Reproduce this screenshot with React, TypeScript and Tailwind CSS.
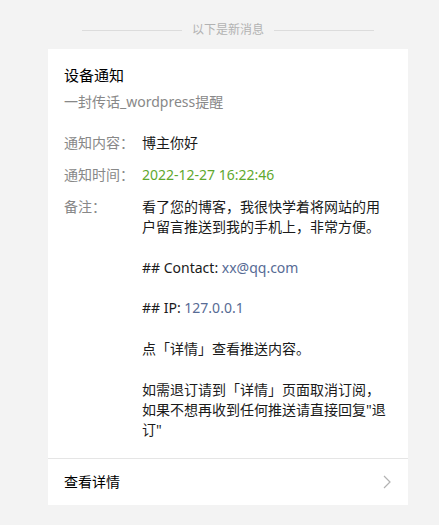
const rows = [
    {label: "通知内容：", value: "博主你好"},
];

const App: React.FC = () => {
    return (<div
        className="min-h-[525px] w-full bg-[#f3f3f3] pt-[21px] text-[14px] leading-5 text-[#1a1a1a]"
        style={{fontFamily: '"Noto Sans", "Noto Sans CJK SC", sans-serif'}}>
        <div className="ml-[82px] flex w-[292px] items-center justify-between">
            <div className="h-px w-[100px] bg-[#dcdcdc]"/>
            <span className="text-[12px] leading-[18px] text-[#b2b2b2]">以下是新消息</span>
            <div className="h-px w-[100px] bg-[#dcdcdc]"/>
        </div>
        <div className="ml-12 mt-[10px] w-[360px] bg-white">
            <div className="px-4 pt-4 pb-[17px]">
                <div className="text-[15px] leading-5 text-black">设备通知</div>
                <div className="mt-[7px] text-[#888888]">一封传话_wordpress提醒</div>
                <div className="mt-[21px] flex flex-col gap-3">
                    {rows.map((row) => (<div key={row.label} className="flex">
                        <div className="w-[78px] shrink-0 text-[#888888]">{row.label}</div>
                        <div>{row.value}</div>
                    </div>))}
                    <div className="flex">
                        <div className="w-[78px] shrink-0 text-[#888888]">通知时间：</div>
                        <div className="text-[#5fa82e]">2022-12-27 16:22:46</div>
                    </div>
                    <div className="flex">
                        <div className="w-[78px] shrink-0 text-[#888888]">备注：</div>
                        <div className="w-[250px] leading-[20.3px]">
                            <p>看了您的博客，我很快学着将网站的用户留言推送到我的手机上，非常方便。</p>
                            <p className="mt-[20.3px]">## Contact: <span className="text-[#576b95]">xx@qq.com</span></p>
                            <p className="mt-[20.3px]">## IP: <span className="text-[#576b95]">127.0.0.1</span></p>
                            <p className="mt-[20.3px]">点「详情」查看推送内容。</p>
                            <p className="mt-[20.3px]">如需退订请到「详情」页面取消订阅，如果不想再收到任何推送请直接回复"退订"</p>
                        </div>
                    </div>
                </div>
            </div>
            <div className="flex h-[47px] items-center justify-between border-t border-[#e5e5e5] pl-4 pr-4">
                <span className="text-black">查看详情</span>
                <svg width="8" height="14" viewBox="0 0 8 14" fill="none" className="mr-[1px]">
                    <path d="M1 1l6 6-6 6" stroke="#b2b2b2" strokeWidth="1.2"/>
                </svg>
            </div>
        </div>
    </div>);
}

export default App;
